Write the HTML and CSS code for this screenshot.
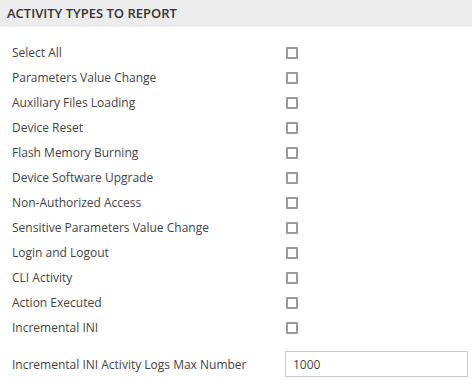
FILE: index.html
```html
<!DOCTYPE html>
<html lang="en">
<head>
    <meta charset="UTF-8">
    <title>Activity Types To Report</title>
    <link rel="stylesheet" href="styles.css">
</head>
<body>

<div class="panel">
    <div class="panel-title">ACTIVITY TYPES TO REPORT</div>

    <div class="rows">
        <label class="row"><span class="row-label">Select All</span><span class="check"></span></label>
        <label class="row"><span class="row-label">Parameters Value Change</span><span class="check"></span></label>
        <label class="row"><span class="row-label">Auxiliary Files Loading</span><span class="check"></span></label>
        <label class="row"><span class="row-label">Device Reset</span><span class="check"></span></label>
        <label class="row"><span class="row-label">Flash Memory Burning</span><span class="check"></span></label>
        <label class="row"><span class="row-label">Device Software Upgrade</span><span class="check"></span></label>
        <label class="row"><span class="row-label">Non-Authorized Access</span><span class="check"></span></label>
        <label class="row"><span class="row-label">Sensitive Parameters Value Change</span><span class="check"></span></label>
        <label class="row"><span class="row-label">Login and Logout</span><span class="check"></span></label>
        <label class="row"><span class="row-label">CLI Activity</span><span class="check"></span></label>
        <label class="row"><span class="row-label">Action Executed</span><span class="check"></span></label>
        <label class="row"><span class="row-label">Incremental INI</span><span class="check"></span></label>

        <label class="row input-row">
            <span class="row-label">Incremental INI Activity Logs Max Number</span>
            <input type="text" class="text-input" value="1000">
        </label>
    </div>
</div>

</body>
</html>
```

FILE: styles.css
```css
body {
    margin: 0;
    background: #ffffff;
    font-family: "Open Sans", Arial, sans-serif;
    font-size: 12px;
    color: #444;
}
.panel {
    width: 472px;
}
.panel-title {
    height: 27px;
    line-height: 27px;
    padding-left: 7px;
    background: #ececec;
    font-weight: 600;
    font-size: 13px;
    color: #333;
}
.rows {
    padding-top: 13px;
}
.row {
    display: flex;
    align-items: center;
    height: 25px;
    padding-left: 12px;
}
.row-label {
    width: 274px;
}
.check {
    width: 8px;
    height: 8px;
    border: 2px solid #999;
    border-radius: 1px;
}
.input-row {
    margin-top: 11px;
    height: 26px;
}
.row-label + .text-input {
    margin-left: -1px;
}
.text-input {
    width: 183px;
    height: 26px;
    box-sizing: border-box;
    border: 1px solid #c8c8d0;
    padding: 0 7px;
    font-family: "Open Sans", Arial, sans-serif;
    font-size: 12px;
    color: #444;
    outline: none;
}
```
